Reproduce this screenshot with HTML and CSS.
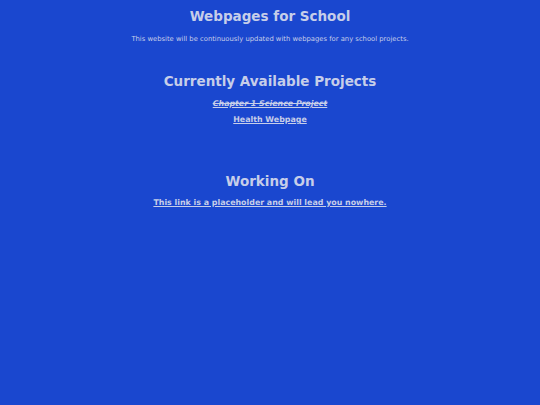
FILE: index.html
```html
<!DOCTYPE html>
<html>
<head lang="en">
    <meta charset="UTF-8">
    <title>Webpages for School</title>
    <link rel="stylesheet" href="styles.css">
</head>
<body>
<div id="header">
    <h1>Webpages for School</h1>
    <p class="intro">This website will be continuously updated with webpages for any school projects.</p>
</div>
<div class="projects">
    <h2>Currently Available Projects</h2>
    <ul class="links">
        <li><a href="#" class="done"><s>Chapter 1 Science Project</s></a></li>
        <li><a href="#">Health Webpage</a></li>
    </ul>
</div>
<div class="projects working">
    <h2>Working On</h2>
    <ul class="links">
        <li><a href="#">This link is a placeholder and will lead you nowhere.</a></li>
    </ul>
</div>
</body>
</html>
```

FILE: styles.css
```css
* {
    margin: 0;
    padding: 0;
}

ul, ol {
    list-style: none;
}

body {
    background-color: #1a47cf;
    color: #c6cee9;
    font-family: "DejaVu Sans", sans-serif;
    text-align: center;
}

#header {
    padding-top: 8px;
}

h1 {
    font-size: 13.5px;
    line-height: 17px;
}

.intro {
    margin-top: 10px;
    font-size: 6.8px;
    line-height: 9px;
}

h2 {
    font-size: 13.5px;
    line-height: 17px;
}

.projects {
    margin-top: 29px;
}

.projects.working {
    margin-top: 48px;
}

.links {
    margin-top: 9px;
}

.working .links {
    margin-top: 8px;
}

.links li {
    margin-bottom: 6px;
    font-size: 7.9px;
    line-height: 10px;
}

.links a {
    color: #c6cee9;
    font-weight: bold;
    text-decoration: underline;
}

.links a.done {
    font-style: italic;
}
```
